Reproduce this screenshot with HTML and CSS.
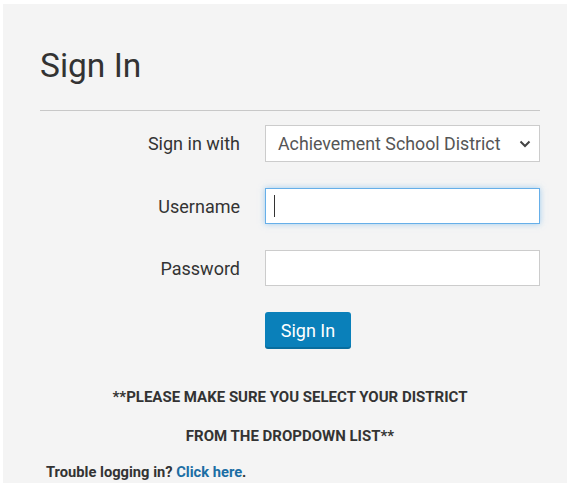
FILE: index.html
```html
<!DOCTYPE html>
<html>
<head>
<meta charset="utf-8">
<link rel="stylesheet" href="styles.css">
</head>
<body>
<div class="panel">
  <h1 class="title">Sign In</h1>
  <hr class="rule">
  <form class="form">
    <label class="label">Sign in with</label>
    <div class="select">
      <span class="select-text">Achievement School District</span>
      <svg class="chev" width="12" height="8" viewBox="0 0 12 8"><path d="M1.5 1.5 L6 6 L10.5 1.5" fill="none" stroke="#444" stroke-width="2"/></svg>
    </div>
    <label class="label">Username</label>
    <div class="input focus"><span class="caret"></span></div>
    <label class="label">Password</label>
    <div class="input"></div>
    <span></span>
    <div><button type="button" class="btn">Sign In</button></div>
  </form>
  <p class="notice">**PLEASE MAKE SURE YOU SELECT YOUR DISTRICT</p>
  <p class="notice">FROM THE DROPDOWN LIST**</p>
  <p class="trouble">Trouble logging in? <a href="#" class="link">Click here</a>.</p>
</div>
</body>
</html>
```
FILE: styles.css
```css
html, body {
  margin: 0;
  background: #fff;
  font-family: Roboto, "Noto Sans", sans-serif;
  color: #333;
}
.panel {
  margin: 4px 3px 0 3px;
  background: #f4f4f4;
  padding: 40px 27px 40px 37px;
  height: 479px;
  box-sizing: border-box;
}
.title {
  margin: 0;
  font-weight: 400;
  font-size: 33.5px;
  line-height: 44px;
  color: #333;
}
.rule {
  border: 0;
  border-top: 1px solid #c8c8c8;
  margin: 22px 0 14px 0;
  width: 500px;
}
.form {
  display: grid;
  grid-template-columns: 200px 275px;
  column-gap: 25px;
  row-gap: 26px;
  align-items: center;
  width: 500px;
}
.label {
  text-align: right;
  font-size: 18px;
  color: #333;
}
.select {
  height: 37px;
  box-sizing: border-box;
  border: 1px solid #ccc;
  background: #fff;
  display: flex;
  align-items: center;
  justify-content: space-between;
  padding: 0 8px 0 12px;
}
.select-text {
  font-size: 17.8px;
  color: #555;
}
.chev { display: block; }
.input {
  height: 36px;
  box-sizing: border-box;
  border: 1px solid #ccc;
  background: #fff;
  display: flex;
  align-items: center;
  padding-left: 8px;
}
.input.focus {
  border-color: #66afe9;
  box-shadow: 0 0 6px rgba(102, 175, 233, 0.6);
}
.caret {
  width: 1px;
  height: 22px;
  background: #333;
}
.btn {
  height: 37px;
  width: 86px;
  border: 0;
  border-radius: 3px;
  background: #0a80ba;
  color: #fff;
  font-family: Roboto, "Noto Sans", sans-serif;
  font-size: 18px;
  padding: 0;
  box-shadow: inset 0 -2px 0 rgba(0,0,0,0.15);
}
.notice {
  width: 500px;
  text-align: center;
  font-weight: 700;
  font-size: 15px;
  margin: 0;
  line-height: 20px;
  color: #333;
}
.notice:first-of-type { margin-top: 38px; }
.notice + .notice { margin-top: 19px; }
.trouble {
  margin: 16px 0 0 6px;
  font-weight: 700;
  font-size: 14.7px;
  line-height: 20px;
  color: #333;
}
.link {
  color: #1c6ea4;
  text-decoration: none;
}
```
